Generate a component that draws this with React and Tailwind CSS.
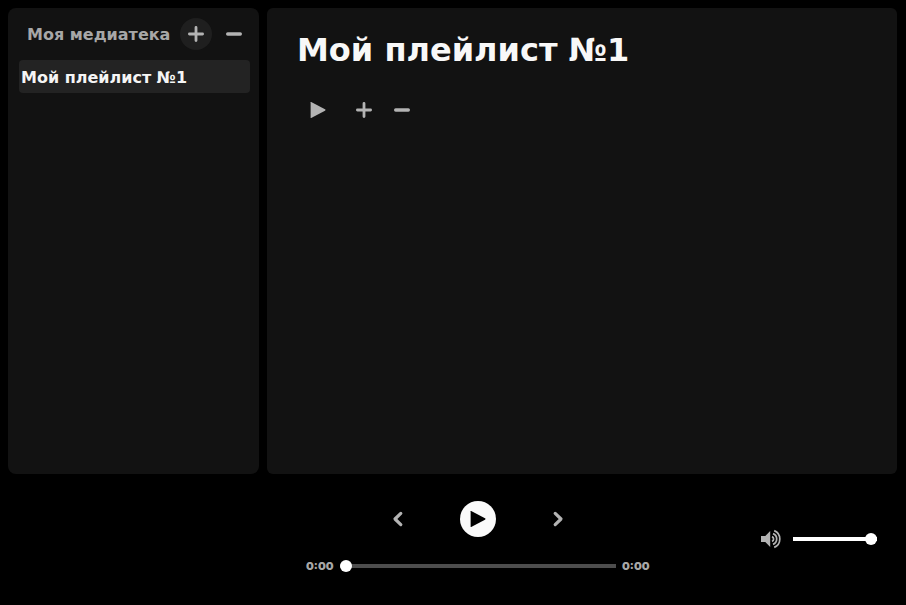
import React, { useState } from "react";

const heavy = "font-['Arial_Black','DejaVu_Sans',Verdana,sans-serif] font-black";
const range =
  "block h-1 min-w-0 cursor-pointer appearance-none [&::-webkit-slider-thumb]:h-3 [&::-webkit-slider-thumb]:w-3 [&::-webkit-slider-thumb]:appearance-none [&::-webkit-slider-thumb]:rounded-full [&::-webkit-slider-thumb]:bg-white";

function Plus() {
  return (
    <svg className="h-4 w-4" viewBox="0 0 16 16" fill="none" stroke="currentColor" strokeWidth="2.8" strokeLinecap="round" aria-hidden="true">
      <path d="M8 1.4v13.2M1.4 8h13.2" />
    </svg>
  );
}

function Minus() {
  return (
    <svg className="h-4 w-4" viewBox="0 0 16 16" fill="none" stroke="currentColor" strokeWidth="3.4" strokeLinecap="round" aria-hidden="true">
      <path d="M1.7 8h12.6" />
    </svg>
  );
}

function Play() {
  return (
    <svg className="h-4 w-4" viewBox="0 0 16 16" fill="currentColor" aria-hidden="true">
      <path d="M.6.3Q.6-.3 1.2 0L15 7.3q1 .7 0 1.4L1.2 16q-.6.3-.6-.3z" />
    </svg>
  );
}

function Chevron({ next }) {
  return (
    <svg className="h-4 w-4" viewBox="0 0 16 16" fill="none" stroke="currentColor" strokeWidth="3.2" strokeLinecap="round" strokeLinejoin="round" aria-hidden="true">
      <path d={next ? "M5.2 2.4 11 8l-5.8 5.6" : "M10.8 2.4 5 8l5.8 5.6"} />
    </svg>
  );
}

function Speaker() {
  return (
    <svg className="h-5 w-5 shrink-0" viewBox="0 0 20 20" aria-hidden="true">
      <path d="M0 7h4.3L9.2 2v16l-4.9-5H0z" fill="currentColor" />
      <g fill="none" stroke="currentColor" strokeWidth="1.7">
        <path d="M11 7.6a2.6 2.6 0 0 1 0 4.8" />
        <path d="M12 4.6a5.8 5.8 0 0 1 0 10.8" />
        <path d="M13.2 1.6a9.1 9.1 0 0 1 0 16.8" />
      </g>
    </svg>
  );
}

function IconButton({ label, className = "", children }) {
  return (
    <button type="button" aria-label={label} className={`flex h-8 w-8 shrink-0 items-center justify-center rounded-full ${className}`}>
      {children}
    </button>
  );
}

export default function App() {
  const [position, setPosition] = useState(0);
  const [volume, setVolume] = useState(100);
  return (
    <div className={`flex h-screen flex-col bg-black text-[#b3b3b3] ${heavy}`}>
      <div className="flex min-h-0 flex-1 gap-2 pt-2 pr-[9px] pl-2">
        <aside className="w-[251px] shrink-0 rounded-lg bg-[#121212] pt-[10px] pr-[9px] pl-[11px]">
          <div className="flex items-center justify-between pl-2">
            <h2 className="pt-[2px] text-base leading-6 whitespace-nowrap text-[#a7a7a7]">Моя медиатека</h2>
            <div className="flex gap-[6px]">
              <IconButton label="Создать плейлист" className="bg-[#1f1f1f]"><Plus /></IconButton>
              <IconButton label="Удалить плейлист"><Minus /></IconButton>
            </div>
          </div>
          <button type="button" className="mt-[10px] block w-full rounded bg-[#232323] px-[2px] pt-[6px] pb-[3px] text-left text-base leading-6 whitespace-nowrap text-[#f5f5f5]">
            Мой плейлист №1
          </button>
        </aside>
        <main className="min-w-0 flex-1 rounded-md bg-[#121212] px-[30px] pt-5">
          <h1 className="text-[32px] leading-[44px] text-[#f8f8f8]">Мой плейлист №1</h1>
          <div className="mt-[22px] flex items-center gap-[6px] pl-[5px]">
            <IconButton label="Воспроизвести плейлист" className="mr-2"><Play /></IconButton>
            <IconButton label="Добавить трек"><Plus /></IconButton>
            <IconButton label="Удалить трек"><Minus /></IconButton>
          </div>
        </main>
      </div>
      <footer className="flex h-[131px] shrink-0 items-center pr-[29px] pb-[3px] pl-[79px]">
        <div className="flex-1" />
        <div className="w-[344px]">
          <div className="flex items-center justify-center gap-[46px]">
            <IconButton label="Предыдущий трек"><Chevron /></IconButton>
            <button type="button" aria-label="Воспроизвести" className="flex h-9 w-9 items-center justify-center rounded-full bg-[#fafafa] text-black">
              <Play />
            </button>
            <IconButton label="Следующий трек"><Chevron next /></IconButton>
          </div>
          <div className="mt-5 flex items-center gap-[6px] font-['Arial_Black','Inter',sans-serif] text-[11px] leading-[18px] text-[#a7a7a7]">
            <span className="w-7">0:00</span>
            <input type="range" aria-label="Позиция" min="0" max="100" value={position} onChange={(e) => setPosition(e.target.value)} className={`flex-1 bg-[#4d4d4d] ${range}`} />
            <span className="w-7">0:00</span>
          </div>
        </div>
        <div className="flex flex-1 items-center justify-end gap-3 pt-[2px]">
          <Speaker />
          <input type="range" aria-label="Громкость" min="0" max="100" value={volume} onChange={(e) => setVolume(e.target.value)} className={`w-[84px] bg-white ${range}`} />
        </div>
      </footer>
    </div>
  );
}
